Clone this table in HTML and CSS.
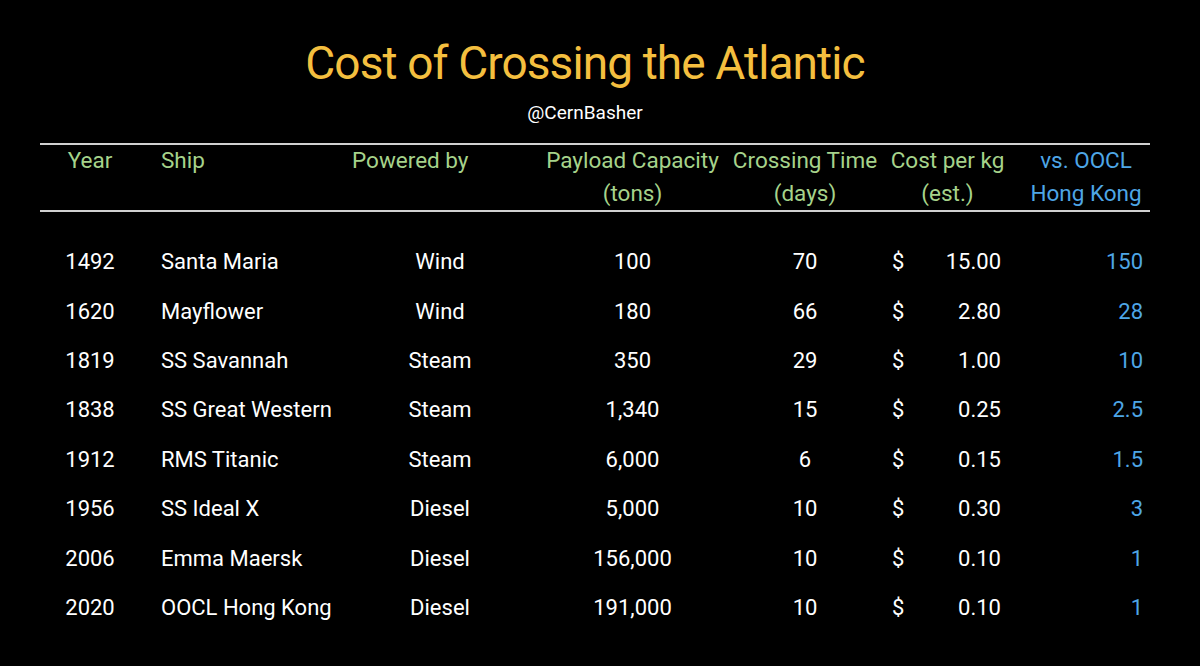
FILE: index.html
```html
<!DOCTYPE html>
<html>
<head>
<meta charset="utf-8">
<link rel="stylesheet" href="styles.css">
</head>
<body>
<div class="page">
  <h1 class="title">Cost of Crossing the Atlantic</h1>
  <div class="handle">@CernBasher</div>
  <div class="table">
    <div class="row head">
      <div class="c c1">Year</div>
      <div class="c c2">Ship</div>
      <div class="c c3">Powered by</div>
      <div class="c c4">Payload Capacity<br>(tons)</div>
      <div class="c c5">Crossing Time<br>(days)</div>
      <div class="c c6h">Cost per kg<br>(est.)</div>
      <div class="c c7h">vs. OOCL<br>Hong Kong</div>
    </div>
    <div class="body">
      <div class="row"><div class="c c1">1492</div><div class="c c2">Santa Maria</div><div class="c c3">Wind</div><div class="c c4">100</div><div class="c c5">70</div><div class="c c6"><span>$</span><span>15.00</span></div><div class="c c7">150</div></div>
      <div class="row"><div class="c c1">1620</div><div class="c c2">Mayflower</div><div class="c c3">Wind</div><div class="c c4">180</div><div class="c c5">66</div><div class="c c6"><span>$</span><span>2.80</span></div><div class="c c7">28</div></div>
      <div class="row"><div class="c c1">1819</div><div class="c c2">SS Savannah</div><div class="c c3">Steam</div><div class="c c4">350</div><div class="c c5">29</div><div class="c c6"><span>$</span><span>1.00</span></div><div class="c c7">10</div></div>
      <div class="row"><div class="c c1">1838</div><div class="c c2">SS Great Western</div><div class="c c3">Steam</div><div class="c c4">1,340</div><div class="c c5">15</div><div class="c c6"><span>$</span><span>0.25</span></div><div class="c c7">2.5</div></div>
      <div class="row"><div class="c c1">1912</div><div class="c c2">RMS Titanic</div><div class="c c3">Steam</div><div class="c c4">6,000</div><div class="c c5">6</div><div class="c c6"><span>$</span><span>0.15</span></div><div class="c c7">1.5</div></div>
      <div class="row"><div class="c c1">1956</div><div class="c c2">SS Ideal X</div><div class="c c3">Diesel</div><div class="c c4">5,000</div><div class="c c5">10</div><div class="c c6"><span>$</span><span>0.30</span></div><div class="c c7">3</div></div>
      <div class="row"><div class="c c1">2006</div><div class="c c2">Emma Maersk</div><div class="c c3">Diesel</div><div class="c c4">156,000</div><div class="c c5">10</div><div class="c c6"><span>$</span><span>0.10</span></div><div class="c c7">1</div></div>
      <div class="row"><div class="c c1">2020</div><div class="c c2">OOCL Hong Kong</div><div class="c c3">Diesel</div><div class="c c4">191,000</div><div class="c c5">10</div><div class="c c6"><span>$</span><span>0.10</span></div><div class="c c7">1</div></div>
    </div>
  </div>
</div>
</body>
</html>
```

FILE: styles.css
```css
html, body {
  margin: 0;
  padding: 0;
  background: #000;
}
body {
  width: 1200px;
  height: 666px;
  overflow: hidden;
  font-family: "Roboto", "Liberation Sans", sans-serif;
  color: #fff;
}
.page {
  padding-top: 35px;
}
.title {
  margin: 0;
  font-weight: normal;
  font-size: 46px;
  line-height: 56px;
  letter-spacing: -0.9px;
  text-align: center;
  color: #f4bf3f;
  padding-right: 30px;
}
.handle {
  margin-top: 10px;
  font-size: 19px;
  line-height: 24px;
  text-align: center;
  padding-right: 30px;
}
.table {
  margin: 18px 0 0 40px;
  width: 1110px;
}
.row {
  display: grid;
  grid-template-columns: 100px 200px 200px 185px 160px 125px 140px;
  align-items: center;
}
.head {
  border-top: 2px solid #d0d0d0;
  border-bottom: 2px solid #d0d0d0;
  font-size: 22.5px;
  line-height: 33px;
  color: #a6d38b;
  align-items: start;
  margin-bottom: -2px;
}
.head .c {
  margin-top: -1px;
}
.body {
  padding-top: 27px;
  font-size: 22px;
}
.body .row {
  height: 49.4px;
}
.c1 { text-align: center; }
.c2 { padding-left: 21px; }
.c3 { text-align: center; }
.head .c3 { text-align: left; padding-left: 12px; }
.c4 { text-align: center; }
.c5 { text-align: center; }
.c6 {
  display: flex;
  justify-content: space-between;
  padding: 0 9px 0 7px;
}
.c6h { text-align: center; }
.c7h { text-align: center; padding-left: 12px; color: #4ea6e6; }
.c7 { text-align: right; padding-right: 7px; color: #4ea6e6; }
```
